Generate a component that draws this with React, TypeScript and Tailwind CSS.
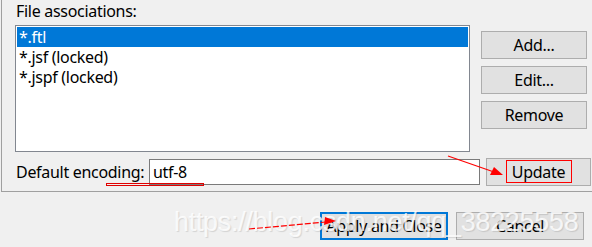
import React from "react";

const font = { fontFamily: '"Noto Sans", "Open Sans", sans-serif' };

function Btn({ children, cls = "" }: { children: React.ReactNode; cls?: string }) {
  return (
    <div
      className={`flex items-center justify-center bg-[#e1e1e1] border border-[#adadad] text-[16px] tracking-[-0.3px] text-black leading-none ${cls}`}
    >
      {children}
    </div>
  );
}

export default function App() {
  return (
    <div
      className="relative w-[592px] h-[247px] bg-[#f0f0f0] overflow-hidden text-black"
      style={font}
    >
      <div className="ml-[1px] h-[192px] border-l border-b border-[#a0a0a0] pl-[13px] pt-[1px]">
        <div className="text-[16px] leading-[20px] pl-[1px] tracking-[-0.3px]">File associations:</div>
        <div className="flex mt-[4px]">
          <div className="w-[455px] h-[127px] border border-[#828790] bg-white p-[1px] text-[16px] tracking-[-0.3px]">
            <div className="h-[20px] leading-[20px] bg-[#0078d7] text-white pl-[2px]">*.ftl</div>
            <div className="h-[20px] leading-[20px] pl-[2px]">*.jsf (locked)</div>
            <div className="h-[20px] leading-[20px] pl-[2px]">*.jspf (locked)</div>
          </div>
          <div className="ml-[11px] mt-[6px] flex flex-col gap-[7px]">
            <Btn cls="w-[106px] h-[28px]">Add...</Btn>
            <Btn cls="w-[106px] h-[28px]">Edit...</Btn>
            <Btn cls="w-[106px] h-[28px]">Remove</Btn>
          </div>
        </div>
        <div className="flex items-center mt-[6px] h-[28px]">
          <div className="text-[16px] w-[134px] pl-[1px] whitespace-nowrap tracking-[-0.3px]">Default encoding:</div>
          <div className="w-[331px] h-[26px] border border-[#7a7a7a] bg-white text-[16px] leading-[24px] pl-[3px] tracking-[-0.3px]">
            utf-8
          </div>
          <Btn cls="ml-[6px] w-[105px] h-[28px]">Update</Btn>
        </div>
      </div>
      <div className="flex justify-end gap-[8px] pr-[8px] pt-[20px]">
        <div className="w-[128px] h-[28px] bg-[#e1e1e1] border-2 border-[#0078d7] flex items-center justify-center text-[16px] tracking-[-0.3px] whitespace-nowrap">
          Apply and Close
        </div>
        <Btn cls="w-[128px] h-[28px]">Cancel</Btn>
      </div>

      {/* watermark */}
      <div
        className="absolute left-[174px] top-[205px] text-[27px] leading-[34px] text-white/80 tracking-[-0.3px] whitespace-nowrap"
        style={{ fontFamily: '"Liberation Sans", sans-serif', textShadow: "1px 1px 1px rgba(0,0,0,0.12)" }}
      >
        https://blog.csdn.net/qq_38225558
      </div>

      {/* red annotations */}
      <div className="absolute left-[506px] top-[160px] w-[66px] h-[23px] border border-[#ff0000]" />
      <div className="absolute left-[106px] top-[183px] w-[98px] h-[3px] border border-[#e00000]" />
      <svg className="absolute left-0 top-0" width="592" height="247">
        <line x1="448" y1="156" x2="494" y2="172" stroke="#ff0000" strokeWidth="1.2" />
        <polygon points="503,175 490,175 494,167" fill="#ff0000" />
        <line x1="249" y1="229" x2="326" y2="222" stroke="#ff0000" strokeWidth="1.2" strokeDasharray="6 2" />
        <polygon points="336,221 324,225 325,217" fill="#ff0000" />
      </svg>
    </div>
  );
}
